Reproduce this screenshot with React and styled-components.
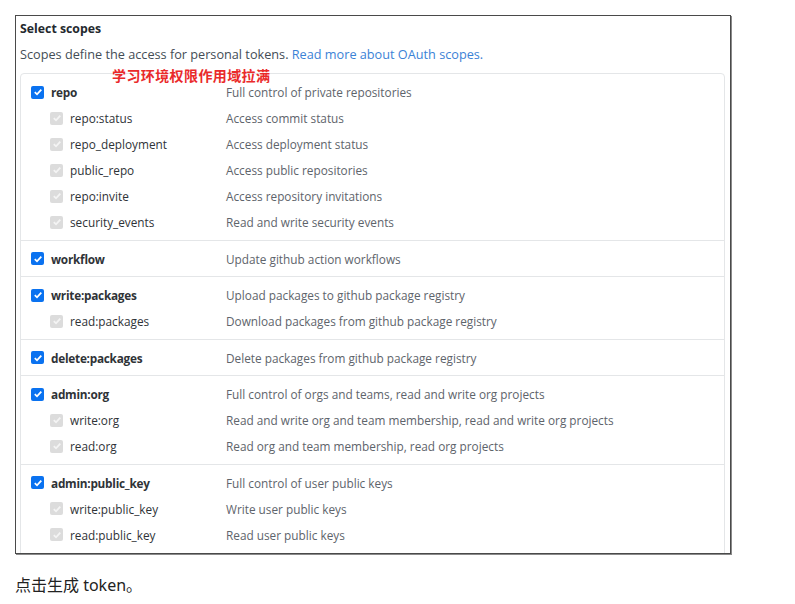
import styled, { createGlobalStyle } from 'styled-components';

const GlobalStyle = createGlobalStyle`
  body {
    margin: 0;
    background: #fff;
    font-family: "Open Sans", "Noto Sans", sans-serif;
  }
`;

const Page = styled.div`
  padding: 15px 0 0 15px;
  width: 795px;
  height: 604px;
  box-sizing: border-box;
`;

const Frame = styled.div`
  position: relative;
  width: 716px;
  height: 539px;
  box-sizing: border-box;
  border: 1px solid #4a4a4a;
  box-shadow: 1px 1px 0 #8a8a8a;
  overflow: hidden;
  padding: 5px 5px 0 4px;
`;

const Title = styled.div`
  font-size: 12.3px;
  font-weight: 700;
  color: #24292e;
  line-height: 16px;
`;

const Intro = styled.div`
  margin-top: 9px;
  font-size: 12.7px;
  color: #444d56;
  line-height: 16px;

  a {
    color: #3b82d6;
    text-decoration: none;
  }
`;

const Note = styled.div`
  position: absolute;
  left: 96px;
  top: 49px;
  font-family: "Noto Sans CJK SC", sans-serif;
  font-weight: 700;
  font-size: 14px;
  color: #ea2a2a;
  letter-spacing: 0.4px;
`;

const ScopeBox = styled.div`
  margin-top: 11px;
  padding-bottom: 20px;
  border: 1px solid #e4e6e8;
  border-radius: 4px;
`;

const Group = styled.div`
  padding: 5px 10px 4.6px;
  border-top: ${(p) => (p.$first ? 'none' : '1px solid #e4e6e8')};
`;

const Row = styled.div`
  display: grid;
  grid-template-columns: 195px 1fr;
  align-items: center;
  height: 26px;
  font-size: 11.8px;
`;

const Label = styled.div`
  display: flex;
  align-items: center;
  padding-left: ${(p) => (p.$sub ? '19px' : '0')};
  color: #2f3337;
  font-weight: ${(p) => (p.$sub ? 400 : 700)};
  letter-spacing: ${(p) => (p.$sub ? '0' : '-0.25px')};
`;

const Box = styled.span`
  display: inline-flex;
  align-items: center;
  justify-content: center;
  width: 13px;
  height: 13px;
  border-radius: 2px;
  margin-right: 7px;
  background: ${(p) => (p.$sub ? '#dcdcdc' : '#0a72f0')};
  flex-shrink: 0;
`;

const Desc = styled.div`
  color: #5e646b;
`;

const Footer = styled.div`
  margin-top: 18px;
  font-family: "Noto Sans", "Noto Sans CJK SC", sans-serif;
  font-size: 16px;
  color: #222;
`;

const Check = ({ sub }) => (
  <Box $sub={sub}>
    <svg width="10" height="10" viewBox="0 0 10 10">
      <path
        d="M1.8 5.2 L4 7.3 L8.3 2.6"
        fill="none"
        stroke={sub ? '#f4f4f4' : '#fff'}
        strokeWidth="1.8"
      />
    </svg>
  </Box>
);

const groups = [
  [
    ['repo', 'Full control of private repositories'],
    ['repo:status', 'Access commit status'],
    ['repo_deployment', 'Access deployment status'],
    ['public_repo', 'Access public repositories'],
    ['repo:invite', 'Access repository invitations'],
    ['security_events', 'Read and write security events'],
  ],
  [['workflow', 'Update github action workflows']],
  [
    ['write:packages', 'Upload packages to github package registry'],
    ['read:packages', 'Download packages from github package registry'],
  ],
  [['delete:packages', 'Delete packages from github package registry']],
  [
    ['admin:org', 'Full control of orgs and teams, read and write org projects'],
    ['write:org', 'Read and write org and team membership, read and write org projects'],
    ['read:org', 'Read org and team membership, read org projects'],
  ],
  [
    ['admin:public_key', 'Full control of user public keys'],
    ['write:public_key', 'Write user public keys'],
    ['read:public_key', 'Read user public keys'],
  ],
];

export default function App() {
  return (
    <Page>
      <GlobalStyle />
      <Frame>
        <Title>Select scopes</Title>
        <Intro>
          Scopes define the access for personal tokens. <a href="#">Read more about OAuth scopes.</a>
        </Intro>
        <Note>学习环境权限作用域拉满</Note>
        <ScopeBox>
          {groups.map((g, gi) => (
            <Group key={gi} $first={gi === 0}>
              {g.map(([name, desc], i) => (
                <Row key={name}>
                  <Label $sub={i > 0}>
                    <Check sub={i > 0} />
                    {name}
                  </Label>
                  <Desc>{desc}</Desc>
                </Row>
              ))}
            </Group>
          ))}
        </ScopeBox>
      </Frame>
      <Footer>点击生成 token。</Footer>
    </Page>
  );
}
